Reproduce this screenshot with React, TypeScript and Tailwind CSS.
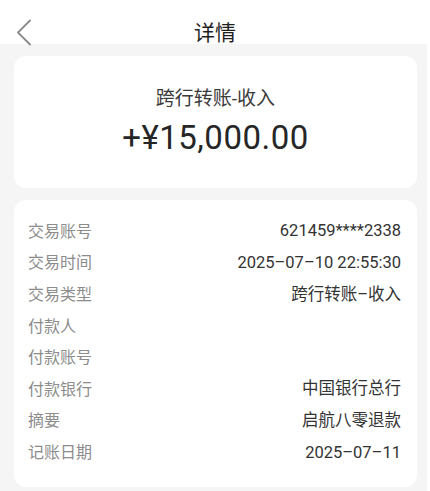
import React from 'react';

const rows: { label: string; value: string }[] = [
    { label: '交易账号', value: '621459****2338' },
    { label: '交易时间', value: '2025–07–10 22:55:30' },
    { label: '交易类型', value: '跨行转账–收入' },
    { label: '付款人', value: '' },
    { label: '付款账号', value: '' },
    { label: '付款银行', value: '中国银行总行' },
    { label: '摘要', value: '启航八零退款' },
    { label: '记账日期', value: '2025–07–11' },
];

export default function App() {
    return (
        <div className="w-[430px] h-[491px] overflow-hidden bg-white flex flex-col font-['Roboto','Noto_Sans_CJK_SC',sans-serif]">
            {/* top bar */}
            <div className="h-[44px] shrink-0 relative flex items-center justify-center">
                <svg className="absolute left-[15px] top-[19px]" width="18" height="27" viewBox="0 0 18 27" fill="none">
                    <path d="M15 1.5 L3 13.5 L15 25.5" stroke="#8a8a8a" strokeWidth="1.8" strokeLinecap="round" strokeLinejoin="round" />
                </svg>
                <span className="mt-[22px] text-[21px] text-[#1f1f1f] leading-none">详情</span>
            </div>

            <div className="flex flex-1">
                <div className="w-[427px] bg-[#f5f5f5] pl-[14px] pr-[10px] pt-[12px] flex flex-col gap-[12px]">
                    {/* amount card */}
                    <div className="h-[132px] bg-white rounded-[12px] flex flex-col items-center pt-[31px]">
                        <div className="text-[19px] leading-[24px] text-[#3a3a3a]">跨行转账-收入</div>
                        <div className="mt-[7px] text-[33px] leading-[40px] text-[#262626] tracking-[0.5px]">+¥15,000.00</div>
                    </div>

                    {/* details card */}
                    <div className="h-[287px] bg-white rounded-[12px] pl-[14px] pr-[16px] pt-[16px]">
                        {rows.map((r) => (
                            <div key={r.label} className="h-[31.6px] flex items-center justify-between">
                                <span className="text-[16px] text-[#8c8c8c]">{r.label}</span>
                                <span className="text-[16.5px] text-[#333333]">{r.value}</span>
                            </div>
                        ))}
                    </div>
                </div>
                <div className="flex-1 bg-white" />
            </div>
        </div>
    );
}
